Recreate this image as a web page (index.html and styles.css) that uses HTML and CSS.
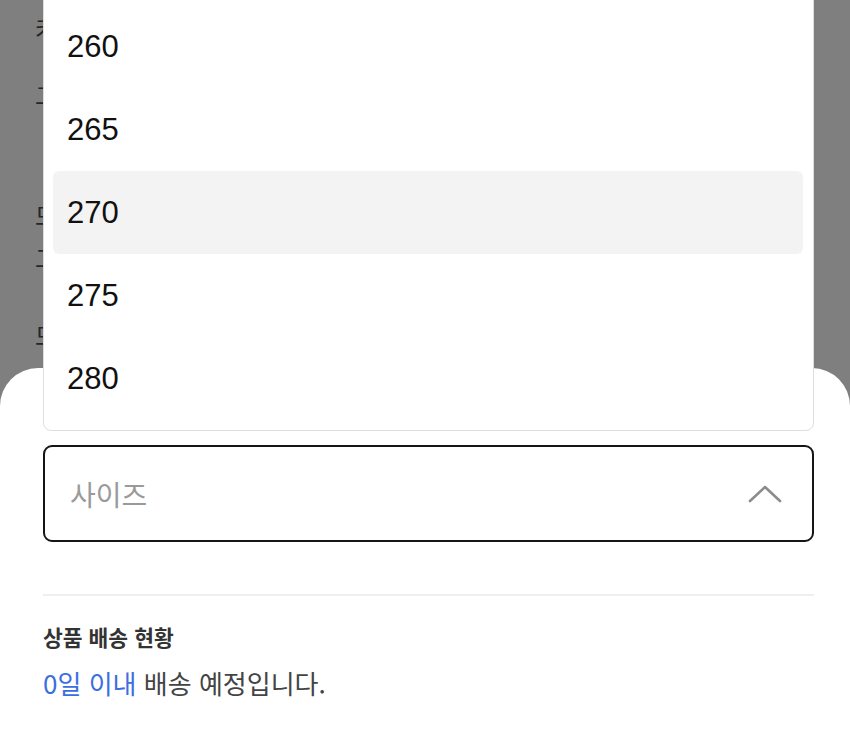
FILE: index.html
```html
<!DOCTYPE html>
<html lang="ko">
<head>
<meta charset="utf-8">
<link rel="stylesheet" href="styles.css">
</head>
<body>
<div class="backdrop">
  <p class="bg-line l1">카테고리 정보</p>
  <p class="bg-line l2">그레이 컬러</p>
  <p class="bg-line l3">모델 착용 사이즈</p>
  <p class="bg-line l4">고객 리뷰 요약</p>
  <p class="bg-line l5">모바일 전용 혜택</p>
</div>
<div class="sheet">
  <div class="select-wrap">
    <ul class="menu">
      <li class="opt">260</li>
      <li class="opt">265</li>
      <li class="opt active">270</li>
      <li class="opt">275</li>
      <li class="opt">280</li>
    </ul>
    <div class="select">
      <span class="placeholder">사이즈</span>
      <svg class="chev" width="34" height="20" viewBox="0 0 34 20"><path d="M2 17 L17 3 L32 17" fill="none" stroke="#8c8c8c" stroke-width="2.6" stroke-linecap="round" stroke-linejoin="round"/></svg>
    </div>
  </div>
  <hr class="divider">
  <h3 class="ship-title">상품 배송 현황</h3>
  <p class="ship-desc"><span class="blue">0일 이내</span> 배송 예정입니다.</p>
</div>
</body>
</html>
```
FILE: styles.css
```css
* { box-sizing: border-box; }
html, body {
  margin: 0;
  padding: 0;
}
body {
  width: 850px;
  height: 736px;
  overflow: hidden;
  position: relative;
  background: #7f7f7f;
  font-family: "Noto Sans CJK KR", "Liberation Sans", sans-serif;
}
.backdrop {
  padding-left: 35px;
  color: #262626;
  font-size: 24px;
}
.bg-line {
  margin: 0;
  line-height: 34px;
  white-space: nowrap;
}
.l1 { padding-top: 11px; }
.l2 { margin-top: 33px; }
.l3 { margin-top: 86px; }
.l4 { margin-top: 9px; }
.l5 { margin-top: 43px; }

.sheet {
  position: absolute;
  left: 0;
  right: 0;
  top: 368px;
  bottom: 0;
  background: #fff;
  border-radius: 38px 38px 0 0;
  padding: 77px 36px 0 43px;
}
.select-wrap {
  position: relative;
}
.menu {
  position: absolute;
  left: 0;
  right: 0;
  bottom: calc(100% + 14px);
  margin: 0;
  list-style: none;
  background: #fff;
  border: 1.5px solid #dedede;
  border-radius: 8px;
  padding: 60px 10px 10px 9px;
}
.opt {
  height: 83px;
  display: flex;
  align-items: center;
  padding-left: 14px;
  font-family: "Liberation Sans", "Noto Sans CJK KR", sans-serif;
  font-size: 31px;
  color: #111;
  border-radius: 6px;
}
.opt.active {
  background: #f3f3f3;
}
.select {
  height: 97px;
  border: 2px solid #151515;
  border-radius: 9px;
  display: flex;
  align-items: center;
  justify-content: space-between;
  padding: 0 30px 0 25px;
}
.placeholder {
  font-size: 28px;
  color: #9a9a9a;
}
.chev {
  display: block;
}
.divider {
  margin: 52px 0 0;
  border: 0;
  height: 2px;
  background: #efefef;
}
.ship-title {
  margin: 26px 0 0;
  font-size: 21.5px;
  line-height: 30px;
  font-weight: 700;
  color: #333;
}
.ship-desc {
  margin: 14px 0 0;
  font-size: 26px;
  line-height: 34px;
  color: #444;
}
.blue {
  color: #3b6ee0;
}
```
